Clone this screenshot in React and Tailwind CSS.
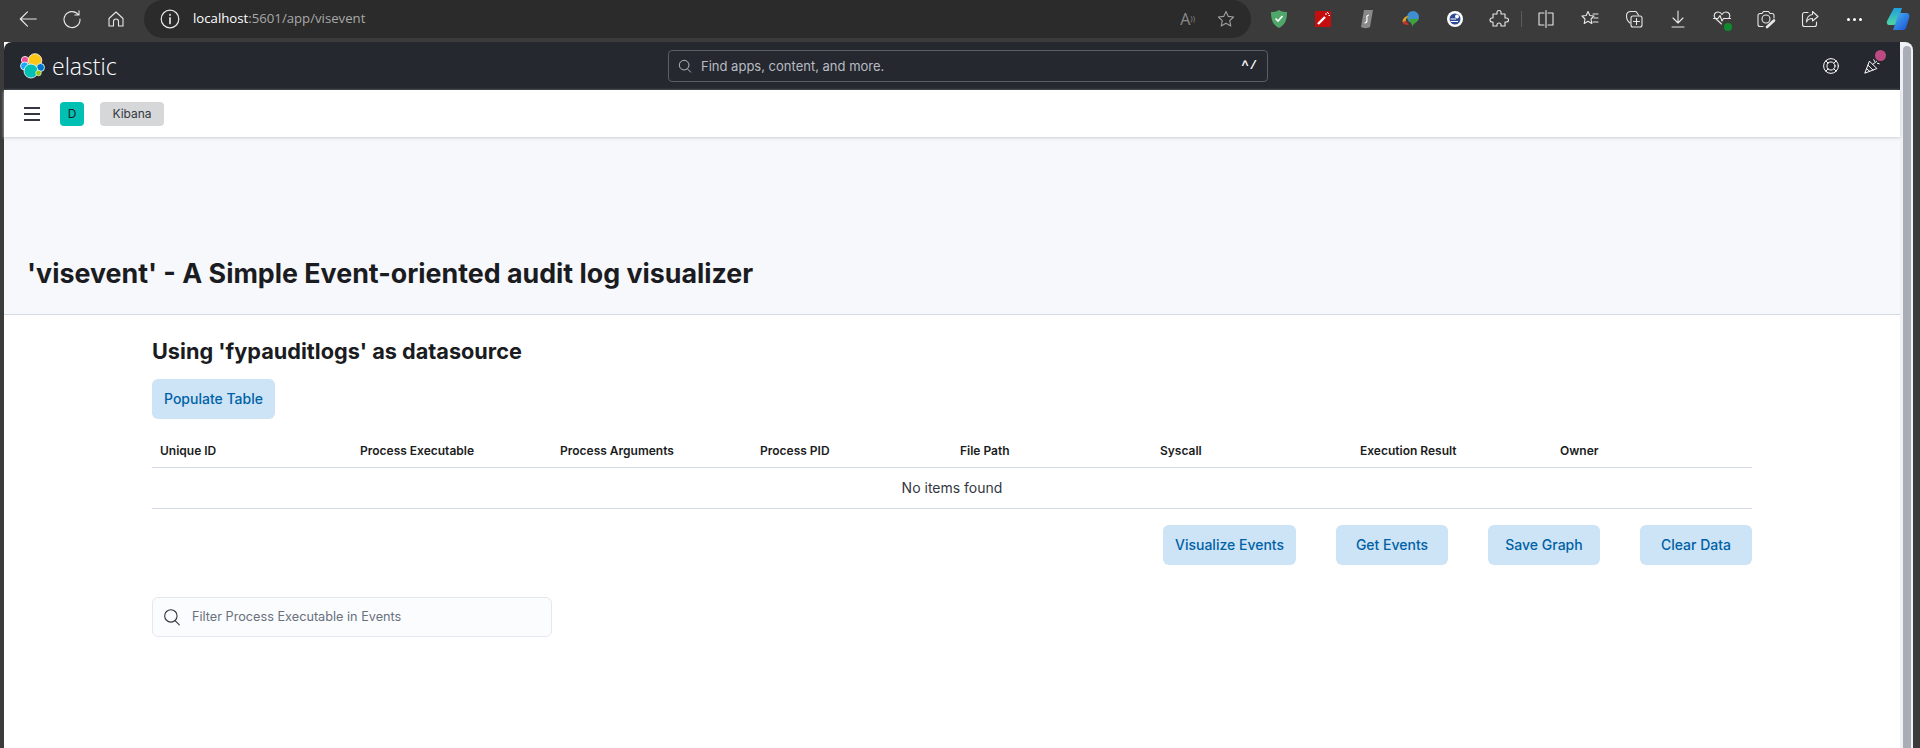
import React from 'react';

const columns = [
  'Unique ID',
  'Process Executable',
  'Process Arguments',
  'Process PID',
  'File Path',
  'Syscall',
  'Execution Result',
  'Owner'
];

const Line = ({ size = 20, children, className = 'text-[#e8e8e8]' }) => (
  <svg
    width={size}
    height={size}
    viewBox="0 0 20 20"
    fill="none"
    stroke="currentColor"
    strokeWidth="1.1"
    strokeLinecap="round"
    strokeLinejoin="round"
    className={className}
  >
    {children}
  </svg>
);

const ToolSlot = ({ children }) => (
  <div className="flex h-[38px] w-[44px] shrink-0 items-center justify-center">{children}</div>
);

const ElasticLogo = () => (
  <svg width="26" height="26" viewBox="0 0 26 26">
    <circle cx="5" cy="7" r="3.6" fill="#f04e98" stroke="#fff" strokeWidth="0.8" />
    <circle cx="15" cy="7.5" r="6.8" fill="#fec514" stroke="#fff" strokeWidth="0.8" />
    <circle cx="4.5" cy="13" r="4" fill="#1ba9f5" stroke="#fff" strokeWidth="0.8" />
    <circle cx="20.5" cy="14.5" r="4" fill="#0077cc" stroke="#fff" strokeWidth="0.8" />
    <circle cx="11" cy="18" r="7" fill="#00bfb3" stroke="#fff" strokeWidth="0.8" />
    <circle cx="18.5" cy="20" r="2.8" fill="#93c90e" stroke="#fff" strokeWidth="0.6" />
  </svg>
);

const SearchGlyph = ({ className, size = 16 }) => (
  <svg width={size} height={size} viewBox="0 0 16 16" fill="none" stroke="currentColor" strokeWidth="1" className={className}>
    <circle cx="7" cy="7" r="5.5" />
    <path d="M11 11.5 L14.5 15" strokeLinecap="round" />
  </svg>
);

const PrimaryButton = ({ children, className = '' }) => (
  <button className={`h-10 rounded-md bg-[#cce4f5] pb-[2px] text-[14px] font-medium text-[#0061a6] ${className}`}>
    {children}
  </button>
);

function BrowserBar() {
  return (
    <div className="flex h-[42px] shrink-0 items-start bg-[#3b3b3b]">
      <div className="flex w-[144px] shrink-0 pl-[6px]">
        <ToolSlot>
          <Line size={22}><path d="M17.5 10 H3 M9.5 3.5 L3 10 L9.5 16.5" /></Line>
        </ToolSlot>
        <ToolSlot>
          <Line size={20}><path d="M16.2 5.5 A8 8 0 1 0 18 10 M17 1.8 V6 H12.8" /></Line>
        </ToolSlot>
        <ToolSlot>
          <Line size={20}><path d="M3 9.5 L10 3 L17 9.5 V17 H12.5 V12.5 A2.5 2.5 0 0 0 7.5 12.5 V17 H3 Z" /></Line>
        </ToolSlot>
      </div>
      <div className="flex h-[38px] w-[1107px] shrink-0 items-center rounded-r-[19px] rounded-l-[19px] bg-[#2b2b2b] pl-[15px] pr-[15px]">
        <Line size={22}>
          <circle cx="10" cy="10" r="8" />
          <path d="M10 9 V14.2 M10 6 V6.6" strokeWidth="1.5" />
        </Line>
        <span className="ml-[12px] font-['Open_Sans',sans-serif] text-[13.2px] text-[#a8a8a8]">
          <span className="text-white">localhost</span>:5601/app/visevent
        </span>
        <div className="ml-auto flex items-center gap-[21px]">
          <span className="font-['Open_Sans',sans-serif] text-[16px] text-[#8a8a8a]">A<sup className="text-[8px]">))</sup></span>
          <Line size={20} className="text-[#a0a0a0]">
            <path d="M10 2.5 L12.3 7.4 L17.6 8 L13.7 11.7 L14.8 17 L10 14.3 L5.2 17 L6.3 11.7 L2.4 8 L7.7 7.4 Z" />
          </Line>
        </div>
      </div>
      <div className="flex pl-[6px]">
        <ToolSlot>
          <svg width="18" height="20" viewBox="0 0 18 20">
            <path d="M9 1 C12 3 15 3 17 3 C17 11 15 16 9 19 C3 16 1 11 1 3 C3 3 6 3 9 1 Z" fill="#4fa86a" />
            <path d="M5.5 9.5 L8 12 L12.5 7" fill="none" stroke="#fff" strokeWidth="1.6" />
          </svg>
        </ToolSlot>
        <ToolSlot>
          <svg width="16" height="16" viewBox="0 0 16 16">
            <rect width="16" height="16" fill="#c40d0d" />
            <path d="M3 13 L10 6" stroke="#fff" strokeWidth="2.4" />
            <path d="M11 2 V4 M13.5 4.5 H15 M12 1 L14 3" stroke="#fff" strokeWidth="1" />
          </svg>
        </ToolSlot>
        <ToolSlot>
          <svg width="14" height="20" viewBox="0 0 14 20">
            <path d="M4 1 H13 L10 18 C8 19.5 3 19.5 1 18 Z" fill="#8a8a8a" />
            <path d="M9 6 C6 6 7 9 7 11 C7 13 6 14 4.5 14" fill="none" stroke="#fff" strokeWidth="1.2" />
          </svg>
        </ToolSlot>
        <ToolSlot>
          <svg width="18" height="18" viewBox="0 0 18 18">
            <circle cx="11" cy="7" r="6" fill="#3f8fd0" />
            <path d="M0.5 12 C1 7 4 6 7 6 C4 8 3.5 10 4 12 Z" fill="#d9a520" />
            <path d="M0.5 12 C1.5 15 5 15.5 7 14.5 L4 11 Z" fill="#c2332d" />
            <path d="M7 9 H17 L11 15 V17 Z" fill="#3da534" />
          </svg>
        </ToolSlot>
        <ToolSlot>
          <svg width="16" height="16" viewBox="0 0 16 16">
            <circle cx="8" cy="8" r="8" fill="#fff" />
            <circle cx="8" cy="8" r="5.5" fill="#2f4a94" />
            <circle cx="10" cy="5.5" r="2" fill="#fff" />
            <path d="M3.5 8 H9 M3.5 10.5 H11" stroke="#fff" strokeWidth="1" />
          </svg>
        </ToolSlot>
        <ToolSlot>
          <Line size={20}>
            <path d="M8 3.5 A2 2 0 0 1 12 3.5 V5 H16 V9 H17.5 A2 2 0 0 1 17.5 13 H16 V17 H12 V16 A2 2 0 0 0 8 16 V17 H4 V13 H3 A2 2 0 0 1 3 9 H4 V5 H8 Z" />
          </Line>
        </ToolSlot>
        <div className="my-[11px] h-[16px] w-px bg-[#5c5c5c]" />
        <div className="w-[2px]" />
        <ToolSlot>
          <Line size={20}>
            <path d="M10 1.5 V18.5 M8 4 H3 V16 H8 M12 4 H17 V16 H12" />
          </Line>
        </ToolSlot>
        <ToolSlot>
          <Line size={20}>
            <path d="M8 2.5 L9.8 6.5 L14 7 L11 10 L11.8 14.5 L8 12.2 L4.2 14.5 L5 10 L2 7 L6.2 6.5 Z" />
            <path d="M13 5 H18 M14 9 H18 M13 13 H18" />
          </Line>
        </ToolSlot>
        <ToolSlot>
          <Line size={20}>
            <path d="M6 14 C3 12 2.5 9 2.5 7 C2.5 4 4 2.5 7 2.5 H12 L14.5 6" />
            <rect x="7" y="7" width="11" height="11" rx="2" />
            <path d="M12.5 9.5 V15.5 M9.5 12.5 H15.5" />
          </Line>
        </ToolSlot>
        <ToolSlot>
          <Line size={20}>
            <path d="M10 2 V13.5 M5 9 L10 14 L15 9 M4 18 H16" />
          </Line>
        </ToolSlot>
        <ToolSlot>
          <div className="relative">
            <Line size={20}>
              <path d="M9.5 15 L3 9 C1 6 3 3 6 3 C8 3 9.5 4.5 10 5.5 C10.5 4.5 12 3 14 3 C17 3 19 6 17 9" />
              <path d="M1.5 9.5 H6 L8 6.5 L10 12 L11.5 9.5 H18.5" />
            </Line>
            <div className="absolute bottom-[-2px] right-0 h-[8px] w-[8px] rounded-full bg-[#0f8a2d]" />
          </div>
        </ToolSlot>
        <ToolSlot>
          <Line size={20}>
            <path d="M7 17.5 H4 A2 2 0 0 1 2 15.5 V6.5 A2 2 0 0 1 4 4.5 H6 L7.5 2.5 H12.5 L14 4.5 H16 A2 2 0 0 1 18 6.5 V9" />
            <circle cx="10" cy="10" r="4" />
            <path d="M11 18 L18 11.5" strokeWidth="2.6" />
          </Line>
        </ToolSlot>
        <ToolSlot>
          <Line size={20}>
            <path d="M8 3.5 H4.5 A2 2 0 0 0 2.5 5.5 V15.5 A2 2 0 0 0 4.5 17.5 H14.5 A2 2 0 0 0 16.5 15.5 V13" />
            <path d="M12.5 2.5 L18 7.5 L12.5 12 V9.5 C9.5 9.5 7.5 10.5 6.5 13 C6.5 9 9 6 12.5 5.5 Z" />
          </Line>
        </ToolSlot>
        <ToolSlot>
          <div className="flex gap-[3px]">
            <div className="h-[3px] w-[3px] rounded-full bg-white" />
            <div className="h-[3px] w-[3px] rounded-full bg-white" />
            <div className="h-[3px] w-[3px] rounded-full bg-white" />
          </div>
        </ToolSlot>
        <ToolSlot>
          <svg width="24" height="24" viewBox="0 0 24 24">
            <defs>
              <linearGradient id="copilotA" x1="0" y1="0" x2="0" y2="1">
                <stop offset="0" stopColor="#1f9fe0" />
                <stop offset="1" stopColor="#4fd6a0" />
              </linearGradient>
              <linearGradient id="copilotB" x1="0" y1="0" x2="1" y2="1">
                <stop offset="0" stopColor="#48b6ee" />
                <stop offset="1" stopColor="#1b4fd8" />
              </linearGradient>
            </defs>
            <path d="M8 1 H16 L11 16 C10 18 8 18 6 18 H3 C1 18 0.5 16 1 14 Z" fill="url(#copilotA)" />
            <path d="M13 6 H20 C23 6 24 8 23 11 L20 21 C19.5 22.5 18 23 17 23 H7 L12 9 Z" fill="url(#copilotB)" />
          </svg>
        </ToolSlot>
      </div>
    </div>
  );
}

function KibanaHeader() {
  return (
    <div className="flex h-[48px] shrink-0 items-center rounded-tl-lg bg-[#25282f]">
      <div className="flex w-[664px] shrink-0 items-center pl-[16px]">
        <ElasticLogo />
        <span className="ml-[6px] font-['Open_Sans',sans-serif] text-[23px] font-light leading-none text-white">elastic</span>
      </div>
      <div className="flex h-8 w-[600px] shrink-0 items-center rounded-[4px] border border-[#5b5e64] pl-[9px] pr-[9px]">
        <SearchGlyph className="text-[#c6c9ce]" size={14} />
        <span className="ml-[9px] pt-[2px] text-[13px] text-[#b9bcc2]">Find apps, content, and more.</span>
        <span className="ml-auto font-['Liberation_Mono',monospace] text-[12px] font-bold tracking-[1px] text-white">^/</span>
      </div>
      <div className="ml-auto flex items-center gap-[23px] pr-[19px]">
        <Line size={18} className="text-white">
          <circle cx="10" cy="10" r="8.2" />
          <circle cx="10" cy="10" r="4.5" />
          <path d="M4.2 4.2 L6.8 6.8 M15.8 4.2 L13.2 6.8 M4.2 15.8 L6.8 13.2 M15.8 15.8 L13.2 13.2" />
        </Line>
        <div className="relative">
          <Line size={18} className="text-white">
            <path d="M7 5 L2 18 L15 13 Z M5.5 9 L11 14.5 M4 13 L7.5 16" />
            <path d="M12 3 L13 5 M16 7 L18 7.5 M11 8 L15 5" />
          </Line>
          <div className="absolute right-[-5px] top-[-7px] h-[11px] w-[11px] rounded-full bg-[#bd4a82]" />
        </div>
      </div>
    </div>
  );
}

function KibanaNav() {
  return (
    <div className="z-10 flex h-[47px] shrink-0 items-center bg-white pl-[20px] shadow-[0_1px_3px_#c8ccd4]">
      <div className="flex w-4 flex-col gap-[4px]">
        <div className="h-[2px] bg-[#343741]" />
        <div className="h-[2px] bg-[#343741]" />
        <div className="h-[2px] bg-[#343741]" />
      </div>
      <div className="ml-[20px] flex h-6 w-6 items-center justify-center rounded-[4px] bg-[#00bfb3] text-[12px] text-[#1a1c21]">D</div>
      <div className="ml-4 flex h-6 w-16 items-center justify-center rounded-[4px] bg-[#d6d7d9] text-[12px] text-[#343741]">Kibana</div>
    </div>
  );
}

export default function App() {
  return (
    <div className="flex h-[748px] w-[1920px] flex-col overflow-hidden bg-[#3b3b3b] font-['Inter',sans-serif]">
      <BrowserBar />
      <div className="flex min-h-0 flex-1 pl-[4px]">
        <div className="flex w-[1896px] shrink-0 flex-col bg-white">
          <KibanaHeader />
          <KibanaNav />
          <div className="flex h-[178px] shrink-0 items-end border-b border-[#d3dae6] bg-[#f7f8fc] pb-[23px] pl-[23px]">
            <h1 className="text-[26.8px] font-bold leading-9 text-[#1a1c21]">'visevent' - A Simple Event-oriented audit log visualizer</h1>
          </div>
          <div className="flex flex-col pl-[148px] pt-[21px]">
            <h2 className="text-[21.7px] font-bold leading-[30px] text-[#1a1c21]">Using 'fypauditlogs' as datasource</h2>
            <PrimaryButton className="mt-[13px] w-[123px]">Populate Table</PrimaryButton>
            <div className="mt-[16px] w-[1600px]">
              <div className="grid h-[33px] grid-cols-8 items-center border-b border-[#d3dae6]">
                {columns.map(col => (
                  <div key={col} className="pl-2 text-[12px] font-semibold text-[#1a1c21]">{col}</div>
                ))}
              </div>
              <div className="flex h-[41px] items-center justify-center border-b border-[#d3dae6] pb-[2px] text-[14px] text-[#343741]">
                No items found
              </div>
              <div className="mt-[16px] flex justify-end gap-10">
                <PrimaryButton className="w-[133px]">Visualize Events</PrimaryButton>
                <PrimaryButton className="w-[112px]">Get Events</PrimaryButton>
                <PrimaryButton className="w-[112px]">Save Graph</PrimaryButton>
                <PrimaryButton className="w-[112px]">Clear Data</PrimaryButton>
              </div>
            </div>
            <div className="mt-8 flex h-10 w-[400px] items-center rounded-md border border-[#e4e7f0] bg-[#fbfcfd] pl-[10px]">
              <SearchGlyph className="text-[#343741]" size={18} />
              <span className="ml-[11px] text-[12.7px] text-[#69707d]">Filter Process Executable in Events</span>
            </div>
          </div>
        </div>
        <div className="flex w-[13px] shrink-0 justify-center rounded-tr-lg bg-[#f0f1f5] pt-[4px]">
          <div className="h-full w-[8px] rounded-t-full bg-[#a9adb6]" />
        </div>
        <div className="w-[7px] shrink-0" />
      </div>
    </div>
  );
}
